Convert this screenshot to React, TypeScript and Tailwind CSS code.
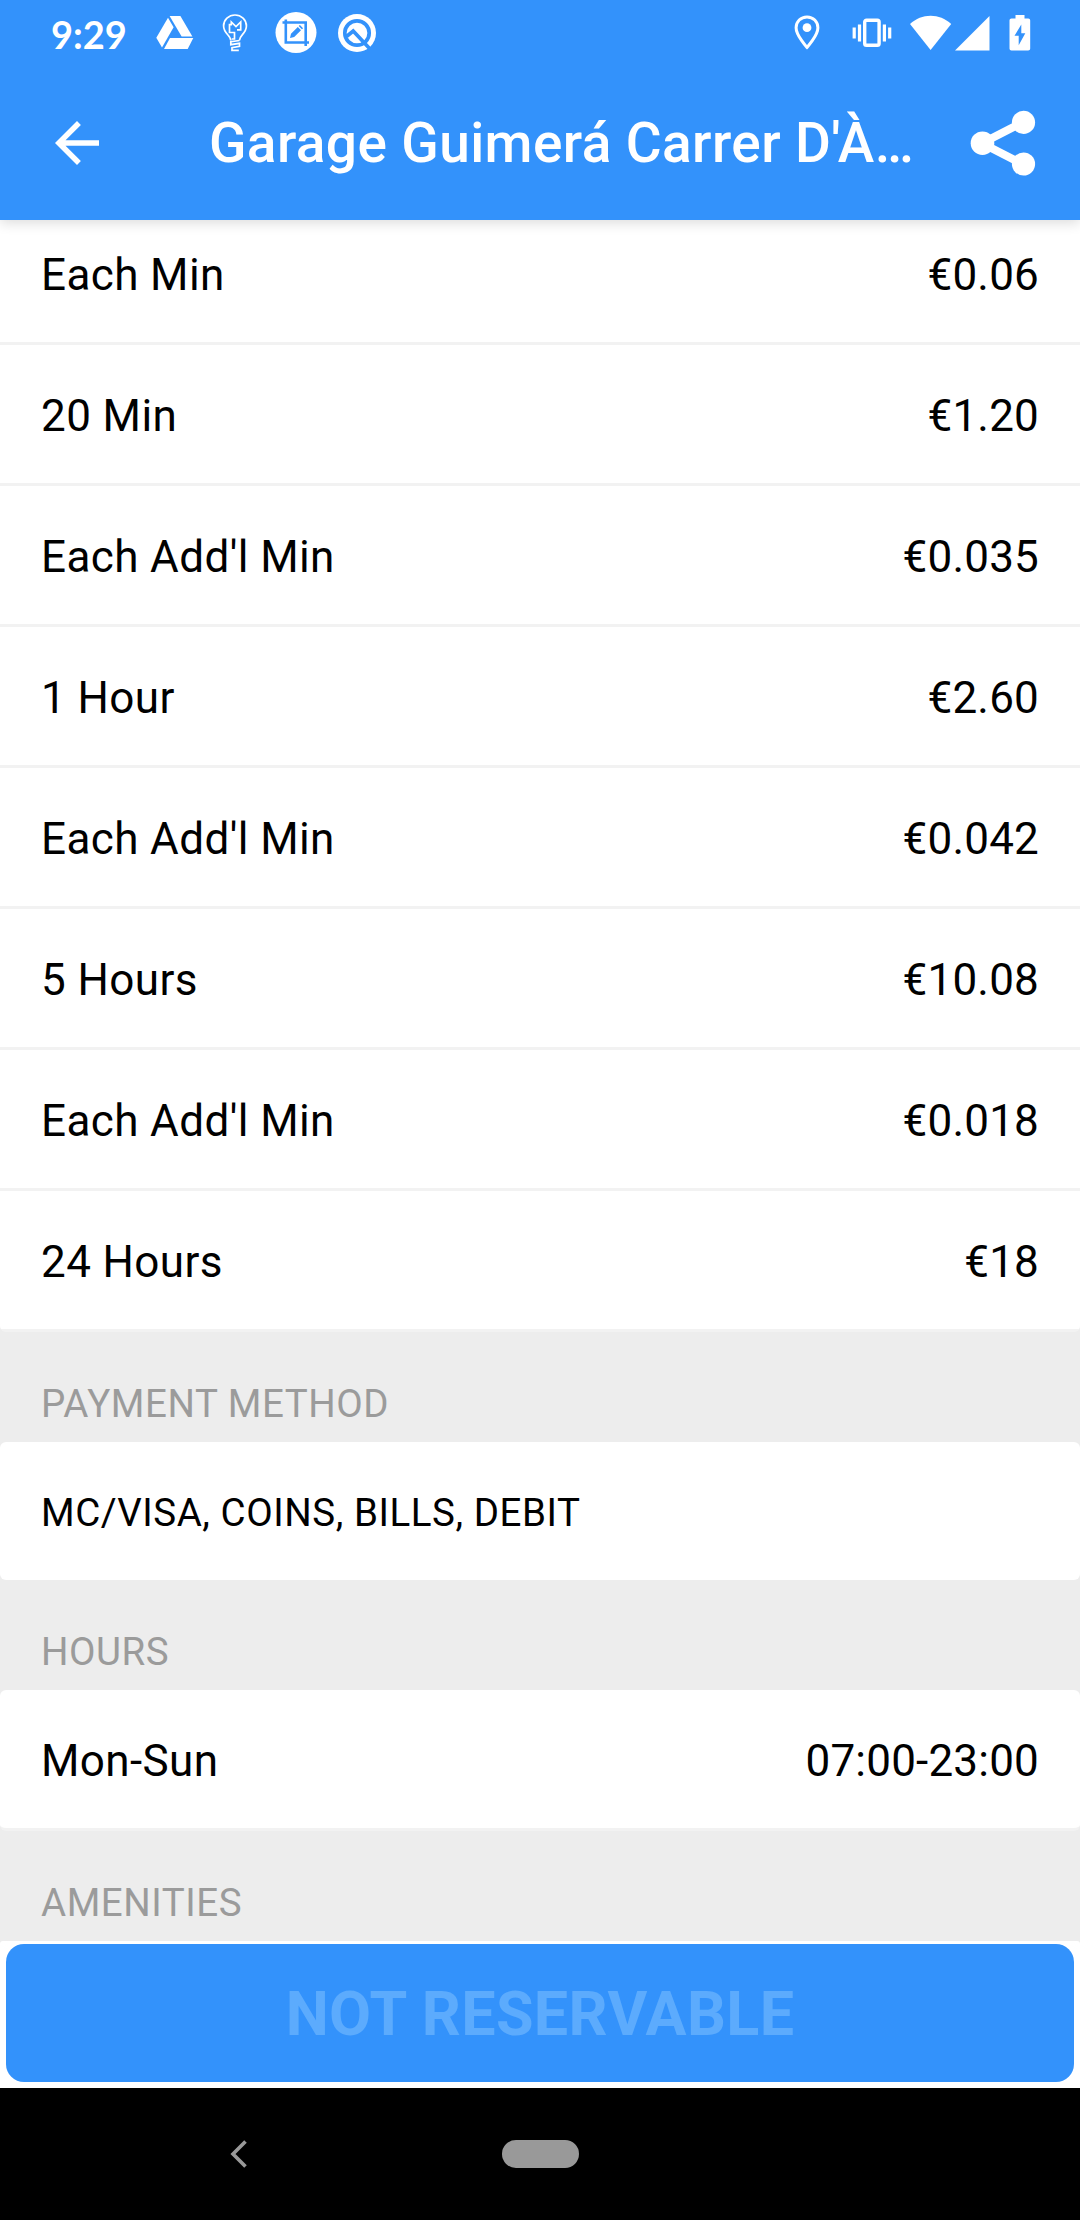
import { ReactNode } from "react";

const rates = [
  { label: "Each Min", price: "€0.06" },
  { label: "20 Min", price: "€1.20" },
  { label: "Each Add'l Min", price: "€0.035" },
  { label: "1 Hour", price: "€2.60" },
  { label: "Each Add'l Min", price: "€0.042" },
  { label: "5 Hours", price: "€10.08" },
  { label: "Each Add'l Min", price: "€0.018" },
  { label: "24 Hours", price: "€18" },
];

const DriveIcon = () => (
  <svg width="38" height="34" viewBox="0 0 38 34" fill="currentColor">
    <path d="M13.6 0h10.8l12 20.5H25.6z" />
    <path d="M12 1.8l5.6 9.4L6 31.4.3 21.8z" />
    <path d="M14 22h23.3l-5.6 11H8z" />
  </svg>
);

const BulbIcon = () => (
  <svg width="26" height="38" viewBox="0 0 26 38" fill="none" stroke="currentColor" strokeWidth="1.7">
    <path d="M8.8 26.5c0-5-7.2-7-7.2-14.5a11.4 11 0 0 1 22.8 0c0 7.500-7 9.300-7 14.500" />
    <path d="M15 15.800h3.700V8L14 12.500 9.300 8v2.700H7.500v7.800h5V25h-2.800" />
    <path d="M17.500 26.500l-8.700 1.200v3l8.700-1.400v3l-7.500 1.300v2.800h6.800" />
  </svg>
);

const CropIcon = () => (
  <svg width="42" height="42" viewBox="0 0 42 42">
    <circle cx="21" cy="20.5" r="20.5" fill="currentColor" />
    <path d="M7.5 10.500h23.200V34M10.800 7.500v23H34" fill="none" stroke="#3392fb" strokeWidth="2.6" />
    <path d="M15 26l1-4.200 6.800-6.800 3.200 3.200-6.800 6.800zM23.700 14.100l1.200-1.100 3.200 3.200-1.200 1.100z" fill="#3392fb" />
  </svg>
);

const QIcon = () => (
  <svg width="40" height="40" viewBox="0 0 40 40" fill="none" stroke="#3392fb">
    <circle cx="20" cy="20" r="19" fill="currentColor" stroke="none" />
    <circle cx="20" cy="20" r="12.200" strokeWidth="3.700" />
    <path d="M9.500 23.500l6.700-5.500L33.500 36.500" strokeWidth="3.700" />
  </svg>
);

const PinIcon = () => (
  <svg width="26" height="36" viewBox="0 0 26 36">
    <path
      d="M13 1.9C6.8 1.9 2.1 6.7 2.1 12.7 2.1 20.5 13 32.4 13 32.4s10.9-11.9 10.9-19.7C23.9 6.7 19.2 1.9 13 1.9z"
      fill="none"
      stroke="currentColor"
      strokeWidth="3"
    />
    <circle cx="13" cy="12.7" r="4.4" fill="currentColor" />
  </svg>
);

const VibrateIcon = () => (
  <svg width="40" height="30" viewBox="0 0 40 30" fill="none" stroke="currentColor">
    <rect x="12.7" y="2.2" width="14.4" height="25" rx="1.8" strokeWidth="3.4" />
    <path d="M7.5 6.5v17M32.4 6.5v17" strokeWidth="3.2" />
    <path d="M2.2 9.5v11M37.7 9.5v11" strokeWidth="3.2" />
  </svg>
);

const WifiIcon = () => (
  <svg width="42" height="36" viewBox="0 0 42 36" fill="currentColor">
    <path d="M0 9C6 3.5 13 .7 20.6.7S35.2 3.5 41.2 9L20.6 35z" />
  </svg>
);

const SignalIcon = () => (
  <svg width="35" height="35" viewBox="0 0 35 35" fill="currentColor">
    <path d="M34.5 0v34.5H0z" />
  </svg>
);

const BatteryIcon = () => (
  <svg width="22" height="36" viewBox="0 0 22 36">
    <path
      d="M6.500 0h9v3.500h3.700c1.200 0 2 .8 2 2V33.500c0 1.200-.8 2-2 2H2.500c-1.200 0-2-.8-2-2V5.500c0-1.200.8-2 2-2h4z"
      fill="currentColor"
    />
    <path d="M12.300 9.500L5.500 20.800h4.200v9.500l6.600-12h-4z" fill="#3392fb" />
  </svg>
);

const StatusBar = () => (
  <div className="flex h-[66px] items-center pl-[51px] pr-[49px] text-white">
    <span className="w-[105px] pt-[2px] font-[Lato,sans-serif] text-[38px] leading-none font-bold">9:29</span>
    <div className="flex flex-1 items-center">
      <DriveIcon />
      <div className="ml-[28px]">
        <BulbIcon />
      </div>
      <div className="ml-[27px]">
        <CropIcon />
      </div>
      <div className="ml-[20px]">
        <QIcon />
      </div>
    </div>
    <div className="flex items-center">
      <PinIcon />
      <div className="ml-[32px]">
        <VibrateIcon />
      </div>
      <div className="ml-[18px]">
        <WifiIcon />
      </div>
      <div className="ml-[3px]">
        <SignalIcon />
      </div>
      <div className="ml-[19px]">
        <BatteryIcon />
      </div>
    </div>
  </div>
);

const AppBar = () => (
  <div className="flex h-[154px] items-center pl-[44px] pr-[44px] text-white">
    <button type="button" aria-label="Back" className="mr-[99px]">
      <svg width="66" height="66" viewBox="0 0 24 24" fill="currentColor">
        <path d="M20 11H7.83l5.59-5.59L12 4l-8 8 8 8 1.41-1.41L7.83 13H20v-2z" />
      </svg>
    </button>
    <h1 className="flex-1 text-[55px] leading-none font-medium tracking-[0.4px] whitespace-nowrap">
      Garage Guimerá Carrer D'À…
    </h1>
    <button type="button" aria-label="Share">
      <svg width="66" height="66" viewBox="0 0 66 66" fill="currentColor">
        <path d="M53.5 12L12 33.200 53.500 54.500" fill="none" stroke="currentColor" strokeWidth="8" />
        <circle cx="12.5" cy="33.2" r="11.8" />
        <circle cx="53.5" cy="12.4" r="11.6" />
        <circle cx="53.5" cy="54" r="11.6" />
      </svg>
    </button>
  </div>
);

const Row = ({ label, value }: { label: string; value: string }) => (
  <div className="flex h-[138px] items-center justify-between bg-white px-[41px] pt-[4px] text-[44px] text-black">
    <span className="tracking-[0.4px]">{label}</span>
    <span className="tracking-[0.2px]">{value}</span>
  </div>
);

const SectionTitle = ({ children }: { children: ReactNode }) => (
  <h2 className="flex h-[110px] items-end px-[41px] pb-[16px] text-[38.5px] leading-[45px] tracking-[0.55px] text-[#9b9b9b]">
    {children}
  </h2>
);

const App = () => {
  return (
    <div className="flex h-[2220px] w-[1080px] flex-col overflow-hidden bg-[#ededed] font-[Roboto,sans-serif]">
      <header className="relative z-10 h-[220px] shrink-0 bg-[#3392fb] shadow-[0_3px_12px_rgba(0,0,0,0.14)]">
        <StatusBar />
        <AppBar />
      </header>

      <main className="h-[1724px] shrink-0">
        {/* the list is scrolled, its first row sits partly under the header */}
        <div className="-mt-[16px] overflow-hidden rounded-[6px] bg-[#f2f2f2]">
          {rates.map((rate, index) => (
            <div key={index} className="border-b-[3px] border-[#f2f2f2]">
              <Row label={rate.label} value={rate.price} />
            </div>
          ))}
        </div>

        <SectionTitle>PAYMENT METHOD</SectionTitle>
        <div className="flex h-[138px] items-center rounded-[6px] bg-white px-[41px] pt-[3px] text-[38.5px] tracking-[0.55px] text-black">
          MC/VISA, COINS, BILLS, DEBIT
        </div>

        <SectionTitle>HOURS</SectionTitle>
        <div className="overflow-hidden rounded-[6px] border-b-[3px] border-[#f2f2f2] bg-white">
          <Row label="Mon-Sun" value="07:00-23:00" />
        </div>

        <SectionTitle>AMENITIES</SectionTitle>
        <div className="h-[3px] rounded-t-[6px] bg-white" />
      </main>

      <div className="h-[144px] shrink-0 bg-white px-[6px]">
        <button
          type="button"
          disabled
          className="flex h-[138px] w-full items-center justify-center rounded-[18px] bg-[#3392fb] pt-[4px] text-[61px] font-bold tracking-[0.4px] text-[#5cabfd]"
        >
          NOT RESERVABLE
        </button>
      </div>

      <nav className="flex h-[132px] shrink-0 items-center bg-black pl-[230px]">
        <svg width="18" height="28" viewBox="0 0 18 28" fill="none" stroke="#999999" strokeWidth="3.6">
          <path d="M15.5 1.5L3 14l12.5 12.5" />
        </svg>
        <div className="ml-[254px] h-[28px] w-[77px] rounded-full bg-[#999999]" />
      </nav>
    </div>
  );
};

export default App;
